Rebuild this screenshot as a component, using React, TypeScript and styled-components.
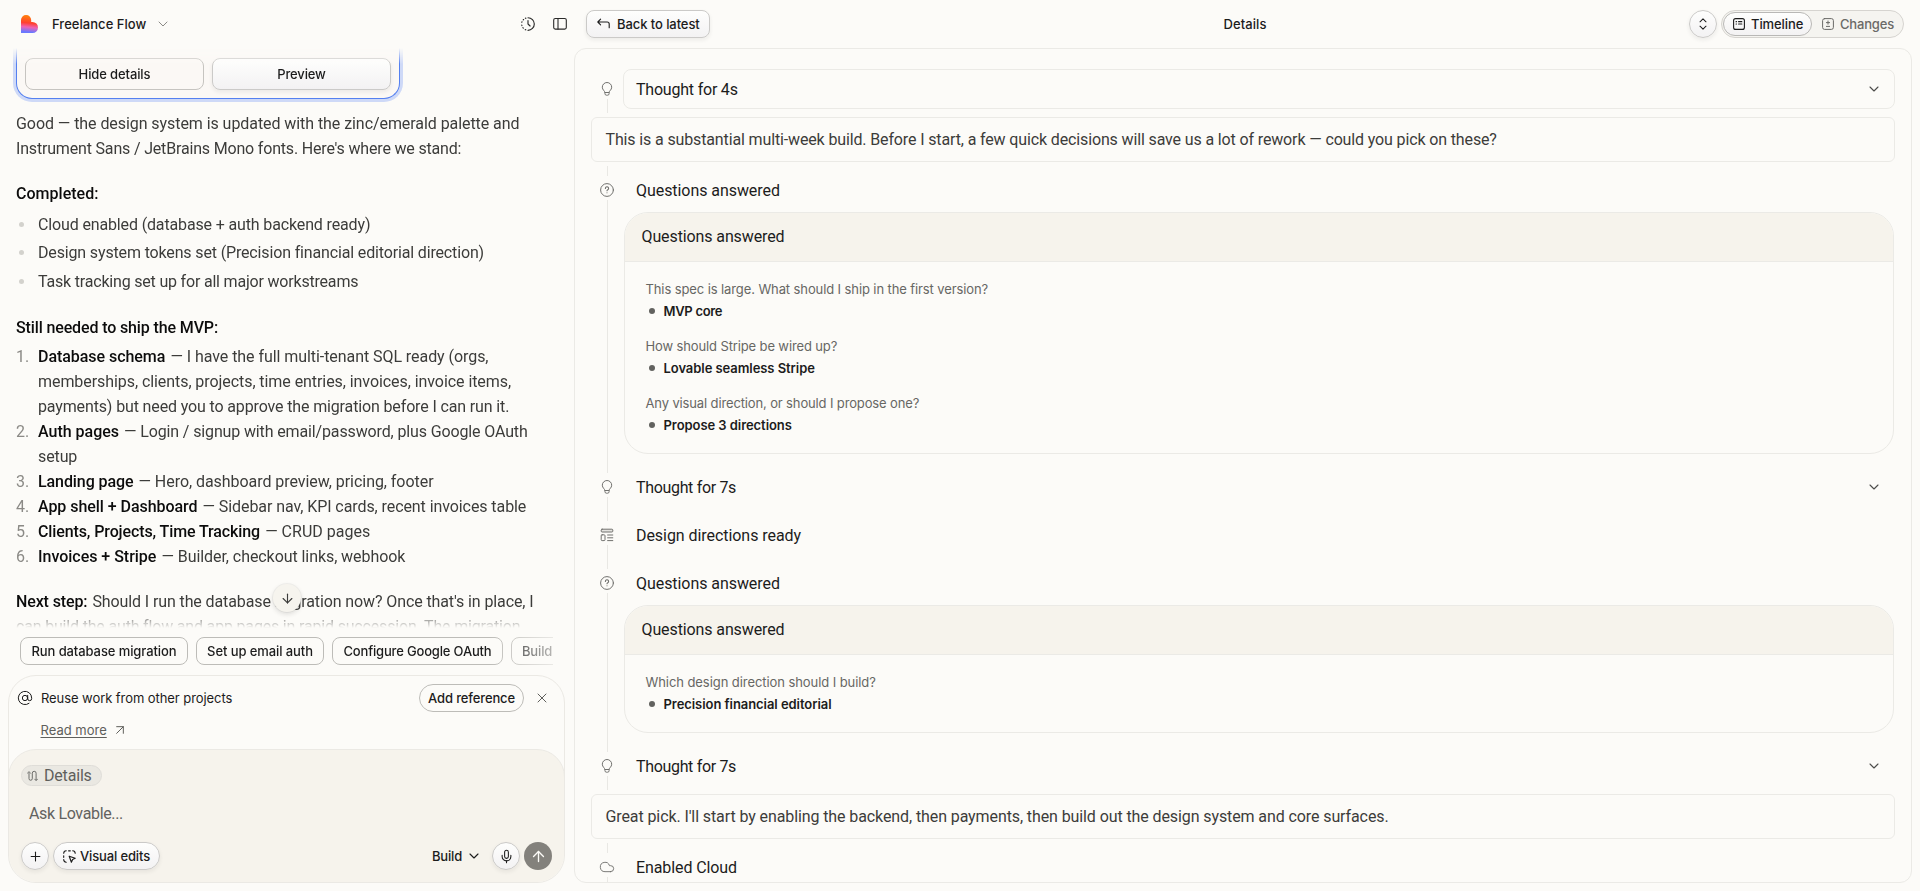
import React from 'react';
import styled, { createGlobalStyle, css } from 'styled-components';
import { ArrowDown, ArrowUp, ArrowUpRight, AtSign, ChevronDown, Cloud, Mic, Plus, X } from 'lucide-react';

const GlobalStyle = createGlobalStyle`
  *, *::before, *::after { box-sizing: border-box; }
  html, body { margin: 0; padding: 0; }
  body {
    background: #fcfbf8;
    color: #1c1c1c;
    font: 400 13px/20px Inter, "Liberation Sans", sans-serif;
    overflow: hidden;
  }
  button { font: inherit; color: inherit; padding: 0; margin: 0; background: none; border: 0; }
  svg { display: block; flex: none; }
`;

const bodyFont = css`
  font-family: Roboto, 'Liberation Sans', sans-serif;
  font-size: 16px;
  line-height: 25px;
`;

const raised = css`
  background: linear-gradient(#fefefd, #f3f2f3);
  border: 1px solid #cbcac8;
  box-shadow: 0 2px 4px rgba(28, 28, 28, 0.07);
`;

/* ---------- page frame ---------- */

const Page = styled.div`
  display: grid;
  grid-template-columns: 574px 1fr;
  grid-template-rows: minmax(0, 1fr);
  height: 891px;
  width: 100%;
  overflow: hidden;
`;

const ChatColumn = styled.section`
  display: flex;
  flex-direction: column;
  min-height: 0;
  padding: 0 9px 8px 8px;
`;

const DetailColumn = styled.section`
  display: flex;
  flex-direction: column;
  min-width: 0;
  min-height: 0;
  padding: 0 8px 8px 0;
`;

const Label = styled.span<{ $ls?: number }>`
  white-space: nowrap;
  letter-spacing: ${p => p.$ls ?? -0.1}px;
`;

/* ---------- chat header ---------- */

const ChatHeader = styled.header`
  display: flex;
  align-items: center;
  height: 48px;
  padding: 0 0 0 13px;
  margin-right: -2px;
  flex: none;
`;

const ProjectName = styled.h1`
  margin: 0 9px 0 14px;
  font: 500 13px/20px Inter, sans-serif;
  color: #1c1c1c;
`;

const HeaderActions = styled.div`
  display: flex;
  align-items: center;
  gap: 18px;
  margin-left: auto;
  color: #2a2a29;
`;

/* ---------- conversation ---------- */

const Conversation = styled.div`
  flex: none;
  height: 580px;
  overflow: hidden;
  padding: 0 8px;
  mask-image: linear-gradient(transparent, #000 16px, #000 562px, transparent 580px);
`;

const VersionCard = styled.div`
  display: flex;
  gap: 8px;
  width: 384px;
  height: 51px;
  padding: 10px 8px 8px;
  border: 1px solid #5580f0;
  border-top: 0;
  border-radius: 0 0 16px 16px;
  background: #fbf8f5;
  box-shadow: 0 0 0 3px #ced9f7;
`;

const CardButton = styled.button<{ $raised?: boolean }>`
  flex: 1;
  height: 32px;
  border-radius: 8px;
  font-weight: 500;
  border: 1px solid #c6c4c0;
  ${p => p.$raised && raised}
`;

const Paragraph = styled.p<{ $top: number }>`
  ${bodyFont}
  margin: ${p => p.$top}px 0 0;
  color: #3c3c3a;
`;

const Line = styled.span<{ $ls?: number }>`
  display: block;
  white-space: nowrap;
  letter-spacing: ${p => p.$ls ?? -0.1}px;
`;

const Strong = styled.strong<{ $ls?: number }>`
  font-weight: 500;
  color: #0c0c0c;
  margin-right: 1.2px;
  letter-spacing: ${p => p.$ls ?? -0.05}px;
`;

const Bullets = styled.ul`
  ${bodyFont}
  list-style: none;
  margin: 6px 0 0;
  padding: 0;
  display: flex;
  flex-direction: column;
  gap: 3.4px;
  color: #3c3c3a;
`;

const Bullet = styled.li`
  display: grid;
  grid-template-columns: 22px 1fr;
  align-items: center;
  &::before {
    content: '';
    width: 5px;
    height: 5px;
    margin-left: 3px;
    border-radius: 50%;
    background: #d3d2cd;
  }
`;

const Steps = styled.ol`
  ${bodyFont}
  list-style: none;
  margin: 4px 0 0;
  padding: 0;
  color: #3c3c3a;
`;

const Step = styled.li`
  display: grid;
  grid-template-columns: 22px 1fr;
`;

const StepNumber = styled.span`
  color: #8b8a86;
`;

const JumpDown = styled.button`
  position: absolute;
  left: 273px;
  top: 584px;
  display: grid;
  place-items: center;
  width: 28px;
  height: 28px;
  border-radius: 50%;
  background: #f6f4ee;
  color: #3c3c3a;
  box-shadow: 0 0 0 1px rgba(28, 28, 28, 0.04), 0 2px 5px rgba(28, 28, 28, 0.14);
`;

/* ---------- suggestions ---------- */

const Suggestions = styled.div`
  display: flex;
  gap: 8px;
  flex: none;
  width: 533px;
  margin: 9px 0 0 12px;
  overflow: hidden;
  mask-image: linear-gradient(to right, #000 470px, transparent 560px);
`;

const Suggestion = styled.button<{ $width: number }>`
  flex: none;
  width: ${p => p.$width}px;
  height: 28px;
  border: 1px solid #bdbcb8;
  border-radius: 8px;
  font-weight: 500;
`;

/* ---------- composer ---------- */

const Composer = styled.div`
  flex: none;
  margin-top: 10px;
  height: 208px;
  border: 1px solid #ebe9e4;
  border-radius: 28px;
  overflow: hidden;
`;

const Tip = styled.div`
  height: 73px;
  padding: 8px 14px 0 8px;
`;

const TipRow = styled.div`
  display: flex;
  align-items: center;
  height: 28px;
  color: #1c1c1c;
`;

const TipText = styled.span`
  margin-left: 8px;
  flex: 1;
`;

const AddReference = styled.button`
  width: 105px;
  height: 28px;
  margin-right: 10px;
  border: 1px solid #bdbcb8;
  border-radius: 14px;
  font-weight: 500;
`;

const ReadMore = styled.div`
  display: flex;
  align-items: center;
  gap: 5px;
  margin: 8px 0 0 23.5px;
  color: #5f5f5c;
  a { text-decoration: underline; text-underline-offset: 2px; }
`;

const InputArea = styled.div`
  display: flex;
  flex-direction: column;
  height: 135px;
  margin: 0 -1px;
  padding: 15px 12px 13px;
  border: 1px solid #ebe9e4;
  border-radius: 28px;
  background: #f6f3ec;
`;

const ContextChip = styled.span`
  ${bodyFont}
  display: inline-flex;
  align-items: center;
  gap: 6px;
  align-self: flex-start;
  height: 21px;
  width: 81px;
  padding-left: 5px;
  border: 1px solid #dfddd8;
  border-radius: 11px;
  background: #eae8e2;
  line-height: 19px;
  color: #5f5f5c;
`;

const Placeholder = styled.div`
  ${bodyFont}
  margin: 15px 0 0 8px;
  color: #62625f;
`;

const InputToolbar = styled.div`
  display: flex;
  align-items: center;
  gap: 4px;
  margin-top: auto;
`;

const RoundButton = styled.button`
  ${raised}
  display: grid;
  place-items: center;
  width: 28px;
  height: 28px;
  border-radius: 50%;
`;

const VisualEdits = styled.button`
  ${raised}
  display: flex;
  align-items: center;
  justify-content: center;
  gap: 4px;
  width: 107px;
  height: 28px;
  border-radius: 14px;
  font-weight: 500;
`;

const ModeSelect = styled.button`
  display: flex;
  align-items: center;
  gap: 4px;
  margin: 0 6px 0 auto;
  font-weight: 500;
`;

const Send = styled.button`
  display: grid;
  place-items: center;
  width: 28px;
  height: 28px;
  border-radius: 50%;
  background: #83817c;
  color: #fcfbf8;
`;

/* ---------- details toolbar ---------- */

const Toolbar = styled.header`
  display: grid;
  grid-template-columns: 1fr auto 1fr;
  align-items: center;
  flex: none;
  height: 48px;
  padding: 0 8px 0 12px;
`;

const BackButton = styled.button`
  ${raised}
  display: flex;
  align-items: center;
  gap: 7px;
  width: 124px;
  height: 28px;
  padding-left: 10px;
  border-radius: 8px;
  font-weight: 500;
`;

const ToolbarTitle = styled.h2`
  margin: 0;
  font: 500 13px/20px Inter, sans-serif;
`;

const ToolbarEnd = styled.div`
  display: flex;
  justify-content: flex-end;
  gap: 4px;
`;

const Segments = styled.div`
  display: flex;
  align-items: center;
  width: 183px;
  height: 28px;
  padding: 0 1px;
  border: 1px solid #d6d4d0;
  border-radius: 14px;
  background: #f5f4f0;
`;

const Segment = styled.button<{ $active?: boolean }>`
  display: flex;
  align-items: center;
  gap: 6px;
  height: 24px;
  padding: 0 10px;
  border-radius: 12px;
  font-weight: 500;
  color: #6a6a67;
  ${p =>
    p.$active &&
    css`
      width: 89px;
      padding: 0 9px;
      background: linear-gradient(#fefefd, #f3f2f3);
      border: 1px solid #b9b8b6;
      color: #1c1c1c;
    `}
`;

/* ---------- timeline ---------- */

const Panel = styled.div`
  flex: 1;
  min-height: 0;
  overflow: hidden;
  padding: 16px 16px 0;
  border: 1px solid #ebeae6;
  border-radius: 12px;
`;

const Item = styled.div`
  display: grid;
  grid-template-columns: 32px 1fr;
`;

const Rail = styled.div`
  display: flex;
  flex-direction: column;
  align-items: center;
  color: #71716e;
`;

const Stub = styled.span<{ $hidden?: boolean; $grow?: boolean }>`
  width: 1px;
  margin-left: 1px;
  ${p => (p.$grow ? 'flex: 1;' : 'height: 10px;')}
  background: ${p => (p.$hidden ? 'transparent' : '#e9e8e4')};
`;

const IconSlot = styled.span`
  display: grid;
  place-items: center;
  width: 16px;
  height: 24px;
  padding-top: 3px;
`;

const ItemBody = styled.div`
  padding: 4px 0;
  min-width: 0;
`;

const ItemHead = styled.div<{ $boxed?: boolean }>`
  ${bodyFont}
  display: flex;
  align-items: center;
  justify-content: space-between;
  height: 40px;
  padding: 0 12px;
  border: 1px solid ${p => (p.$boxed ? '#ebeae6' : 'transparent')};
  border-radius: 8px;
  color: #1c1c1c;
  svg { color: #4c4c4a; }
`;

const Message = styled.div`
  ${bodyFont}
  display: flex;
  align-items: center;
  height: 45px;
  margin: 4px 0;
  padding: 0 13.5px;
  border: 1px solid #ebeae6;
  border-radius: 6px;
  color: #3c3c3a;
`;

const AnswerCard = styled.div`
  margin: 2px 1px 5px;
  border: 1px solid #ebeae6;
  border-radius: 24px;
  overflow: hidden;
`;

const AnswerTitle = styled.div`
  ${bodyFont}
  height: 49px;
  padding: 11px 16.5px;
  background: #f6f3ec;
  border-bottom: 1px solid #ebeae6;
  color: #1c1c1c;
`;

const AnswerList = styled.div`
  display: flex;
  flex-direction: column;
  gap: 15px;
  padding: 17px 20.5px 18px;
`;

const Question = styled.div`
  color: #676764;
`;

const Answer = styled.div`
  display: flex;
  align-items: center;
  gap: 9px;
  margin-top: 2px;
  padding-left: 3px;
  font-weight: 600;
  &::before {
    content: '';
    width: 6px;
    height: 6px;
    border-radius: 50%;
    background: #62625f;
  }
`;

/* ---------- icons ---------- */

const Logo = () => (
  <svg width="17" height="18" viewBox="0 0 17 18">
    <defs>
      <linearGradient id="logo" x1="0.55" y1="0" x2="0.45" y2="1">
        <stop offset="0.1" stopColor="#ff7a10" />
        <stop offset="0.45" stopColor="#ff4030" />
        <stop offset="0.68" stopColor="#ee62b4" />
        <stop offset="0.95" stopColor="#6a78ff" />
      </linearGradient>
    </defs>
    <path fill="url(#logo)" d="M5.1 0a5.1 5.1 0 0 1 5.1 5.1v1.9h1.3a5.5 5.5 0 0 1 0 11H0V5.1A5.1 5.1 0 0 1 5.1 0Z" />
  </svg>
);

const stroke = { fill: 'none', stroke: 'currentColor', strokeLinecap: 'round', strokeLinejoin: 'round' } as const;

const HistoryIcon = () => (
  <svg width="14" height="14" viewBox="0 0 14 14" {...stroke} strokeWidth="1.15">
    <path d="M7 .7a6.3 6.3 0 0 1 0 12.6M7 3.6V7l2.1 2" />
    <path d="M4.9 1.1l-.5.2M2.6 2.5l-.4.4M1 4.8l-.2.5M.8 8l.1.6M1.9 10.7l.4.4M4.2 12.6l.6.2" />
  </svg>
);

const SidebarIcon = () => (
  <svg width="14" height="14" viewBox="0 0 14 14" {...stroke} strokeWidth="1.1">
    <rect x=".7" y="1.5" width="12.6" height="10.6" rx="1.6" />
    <path d="M5 1.5v10.6" />
  </svg>
);

const ReturnIcon = () => (
  <svg width="13" height="12" viewBox="0 0 13 12" {...stroke} strokeWidth="1.1">
    <path d="M3.6 1.2.8 4l2.8 2.8M.8 4h9.4a2 2 0 0 1 2 2v3.8" />
  </svg>
);

const ExpandIcon = () => (
  <svg width="8" height="12" viewBox="0 0 8 12" {...stroke} strokeWidth="1.05">
    <path d="M1 3.8 4 .9l3 2.9M1 8.2l3 2.9 3-2.9" />
  </svg>
);

const TimelineIcon = () => (
  <svg width="12" height="12" viewBox="0 0 12 12" {...stroke} strokeWidth="1.1">
    <rect x=".6" y=".6" width="10.8" height="10.8" rx="2" />
    <path d="M3.1 3.7h.4M3.1 6h.4M5.6 3.7h3.2M5.6 6h3.2" strokeWidth="1.2" />
  </svg>
);

const ChangesIcon = () => (
  <svg width="12" height="12" viewBox="0 0 12 12" {...stroke} strokeWidth="1">
    <rect x=".6" y=".6" width="10.8" height="10.8" rx="2" />
    <path d="M6 3v3.2M4.4 4.6h3.2M4.4 8.4h3.2" />
  </svg>
);

const BulbIcon = () => (
  <svg width="14" height="14" viewBox="0 0 14 14" {...stroke} strokeWidth="1">
    <path d="M4.9 10.4C4.9 8.8 2.3 8 2.3 5.2a4.7 4.7 0 0 1 9.4 0c0 2.8-2.6 3.6-2.6 5.2v1.3a1.5 1.5 0 0 1-1.5 1.5H6.4a1.5 1.5 0 0 1-1.5-1.5ZM5 10.5h4" />
  </svg>
);

const QuestionIcon = () => (
  <svg width="14" height="14" viewBox="0 0 14 14" {...stroke} strokeWidth="1">
    <circle cx="7" cy="7" r="6.4" />
    <path d="M5.4 5.4a1.6 1.6 0 1 1 2.4 1.4c-.5.3-.8.5-.8 1M7 9.7v.1" strokeWidth="1.1" />
  </svg>
);

const LayoutIcon = () => (
  <svg width="14" height="14" viewBox="0 0 14 14" {...stroke} strokeWidth="1">
    <rect x="1.2" y="1.2" width="11.6" height="2.8" rx=".9" fill="#e4e3df" />
    <rect x="1.2" y="6.8" width="3.8" height="5.8" rx=".9" />
    <path d="M7.6 7h5.2M7.6 9.8h5.2M7.6 12.6h5.2" />
  </svg>
);

const RouteIcon = () => (
  <svg width="11" height="12" viewBox="0 0 11 12" {...stroke} strokeWidth=".9">
    <path d="M2 3.4v5.2a1.6 1.6 0 0 0 3.3 0V3.2a1.9 1.9 0 0 1 3.8 0v6.4M.6 3.2 2 1.6l1.4 1.6M7.8 9.2l1.3 1.5 1.3-1.5" />
  </svg>
);

const VisualIcon = () => (
  <svg width="13" height="13" viewBox="0 0 13 13" {...stroke} strokeWidth="1.15">
    <path d="M3.2.8a2.6 2.6 0 0 0-2.5 2.4M.7 5.7v1.6M.7 9.6a2.6 2.6 0 0 0 2.5 2.6M5.6.8h1.7M9.7.8a2.6 2.6 0 0 1 2.5 2.4" />
    <path d="M6.2 6.2l6 2.1-2.6 1.2-1.2 2.7z" />
  </svg>
);

/* ---------- data ---------- */

const steps: { title: string; titleLs: number; lines: [string, number][] }[] = [
  {
    title: 'Database schema',
    titleLs: -0.05,
    lines: [
      ['— I have the full multi-tenant SQL ready (orgs,', -0.061],
      ['memberships, clients, projects, time entries, invoices, invoice items,', -0.067],
      ['payments) but need you to approve the migration before I can run it.', -0.139],
    ],
  },
  { title: 'Auth pages', titleLs: -0.01, lines: [['— Login / signup with email/password, plus Google OAuth', -0.134], ['setup', -0.11]] },
  { title: 'Landing page', titleLs: -0.09, lines: [['— Hero, dashboard preview, pricing, footer', -0.051]] },
  { title: 'App shell + Dashboard', titleLs: -0.05, lines: [['— Sidebar nav, KPI cards, recent invoices table', -0.081]] },
  { title: 'Clients, Projects, Time Tracking', titleLs: -0.11, lines: [['— CRUD pages', 0]] },
  { title: 'Invoices + Stripe', titleLs: -0.02, lines: [['— Builder, checkout links, webhook', -0.07]] },
];

const suggestions: [string, number, number][] = [
  ['Run database migration', 168, -0.094],
  ['Set up email auth', 128, -0.088],
  ['Configure Google OAuth', 171, -0.175],
  ['Build landing page', 134, -0.15],
];

type QA = [question: string, qLs: number, answer: string, aLs: number];

const firstAnswers: QA[] = [
  ['This spec is large. What should I ship in the first version?', -0.105, 'MVP core', -0.307],
  ['How should Stripe be wired up?', -0.127, 'Lovable seamless Stripe', -0.065],
  ['Any visual direction, or should I propose one?', -0.134, 'Propose 3 directions', -0.06],
];

const secondAnswers: QA[] = [['Which design direction should I build?', -0.073, 'Precision financial editorial', -0.061]];

type ItemProps = {
  icon: React.ReactNode;
  title: string;
  ls: number;
  first?: boolean;
  boxed?: boolean;
  expandable?: boolean;
  children?: React.ReactNode;
};

const TimelineItem = ({ icon, title, ls, first, boxed, expandable, children }: ItemProps) => (
  <Item>
    <Rail>
      <Stub $hidden={first} />
      <IconSlot>{icon}</IconSlot>
      <Stub $grow />
    </Rail>
    <ItemBody>
      <ItemHead $boxed={boxed}>
        <Label $ls={ls}>{title}</Label>
        {expandable && <ChevronDown size={16} strokeWidth={1.6} />}
      </ItemHead>
      {children}
    </ItemBody>
  </Item>
);

const Answers = ({ items }: { items: QA[] }) => (
  <AnswerCard>
    <AnswerTitle>
      <Label $ls={-0.109}>Questions answered</Label>
    </AnswerTitle>
    <AnswerList>
      {items.map(([q, qLs, a, aLs]) => (
        <div key={q}>
          <Question>
            <Label $ls={qLs}>{q}</Label>
          </Question>
          <Answer>
            <Label $ls={aLs}>{a}</Label>
          </Answer>
        </div>
      ))}
    </AnswerList>
  </AnswerCard>
);

export default function App() {
  return (
    <>
      <GlobalStyle />
      <Page>
        <ChatColumn>
          <ChatHeader>
            <Logo />
            <ProjectName>
              <Label $ls={0.035}>Freelance Flow</Label>
            </ProjectName>
            <ChevronDown size={16} strokeWidth={1.5} color="#8b8a86" />
            <HeaderActions>
              <HistoryIcon />
              <SidebarIcon />
            </HeaderActions>
          </ChatHeader>

          <Conversation>
            <VersionCard>
              <CardButton>
                <Label $ls={-0.116}>Hide details</Label>
              </CardButton>
              <CardButton $raised>
                <Label $ls={-0.136}>Preview</Label>
              </CardButton>
            </VersionCard>
            <Paragraph $top={12}>
              <Line $ls={-0.066}>Good — the design system is updated with the zinc/emerald palette and</Line>
              <Line $ls={-0.176}>Instrument Sans / JetBrains Mono fonts. Here's where we stand:</Line>
            </Paragraph>
            <Paragraph $top={20}>
              <Strong $ls={0.027}>Completed:</Strong>
            </Paragraph>
            <Bullets>
              <Bullet><Label $ls={-0.142}>Cloud enabled (database + auth backend ready)</Label></Bullet>
              <Bullet><Label $ls={-0.15}>Design system tokens set (Precision financial editorial direction)</Label></Bullet>
              <Bullet><Label $ls={-0.193}>Task tracking set up for all major workstreams</Label></Bullet>
            </Bullets>
            <Paragraph $top={21}>
              <Strong $ls={-0.129}>Still needed to ship the MVP:</Strong>
            </Paragraph>
            <Steps>
              {steps.map((s, i) => (
                <Step key={s.title}>
                  <StepNumber>{i + 1}.</StepNumber>
                  <div>
                    {s.lines.map(([text, ls], n) => (
                      <Line key={text} $ls={ls}>
                        {n === 0 && <><Strong $ls={s.titleLs}>{s.title}</Strong> </>}
                        {text}
                      </Line>
                    ))}
                  </div>
                </Step>
              ))}
            </Steps>
            <Paragraph $top={20}>
              <Line $ls={-0.11}>
                <Strong $ls={-0.12}>Next step:</Strong> Should I run the database migration now? Once that's in place, I
              </Line>
              <Line $ls={-0.178}>can build the auth flow and app pages in rapid succession. The migration</Line>
            </Paragraph>
          </Conversation>

          <JumpDown aria-label="Scroll to bottom">
            <ArrowDown size={15} strokeWidth={1.8} />
          </JumpDown>

          <Suggestions>
            {suggestions.map(([text, width, ls]) => (
              <Suggestion key={text} $width={width}>
                <Label $ls={ls}>{text}</Label>
              </Suggestion>
            ))}
          </Suggestions>

          <Composer>
            <Tip>
              <TipRow>
                <AtSign size={16} strokeWidth={1.5} />
                <TipText>
                  <Label $ls={-0.07}>Reuse work from other projects</Label>
                </TipText>
                <AddReference>
                  <Label $ls={-0.128}>Add reference</Label>
                </AddReference>
                <X size={16} strokeWidth={1.5} color="#5f5f5c" />
              </TipRow>
              <ReadMore>
                <a><Label $ls={0}>Read more</Label></a>
                <ArrowUpRight size={16} strokeWidth={1.5} />
              </ReadMore>
            </Tip>
            <InputArea>
              <ContextChip>
                <RouteIcon />
                <Label $ls={-0.18}>Details</Label>
              </ContextChip>
              <Placeholder>
                <Label $ls={-0.339}>Ask Lovable...</Label>
              </Placeholder>
              <InputToolbar>
                <RoundButton aria-label="Add">
                  <Plus size={15} strokeWidth={1.7} />
                </RoundButton>
                <VisualEdits>
                  <VisualIcon />
                  <Label $ls={-0.141}>Visual edits</Label>
                </VisualEdits>
                <ModeSelect>
                  <Label $ls={-0.189}>Build</Label>
                  <ChevronDown size={16} strokeWidth={1.7} />
                </ModeSelect>
                <RoundButton aria-label="Dictate">
                  <Mic size={15} strokeWidth={1.7} />
                </RoundButton>
                <Send aria-label="Send">
                  <ArrowUp size={17} strokeWidth={1.9} />
                </Send>
              </InputToolbar>
            </InputArea>
          </Composer>
        </ChatColumn>

        <DetailColumn>
          <Toolbar>
            <BackButton>
              <ReturnIcon />
              <Label $ls={-0.078}>Back to latest</Label>
            </BackButton>
            <ToolbarTitle>
              <Label $ls={0.08}>Details</Label>
            </ToolbarTitle>
            <ToolbarEnd>
              <RoundButton aria-label="Expand">
                <ExpandIcon />
              </RoundButton>
              <Segments>
                <Segment $active>
                  <TimelineIcon />
                  <Label $ls={-0.082}>Timeline</Label>
                </Segment>
                <Segment>
                  <ChangesIcon />
                  <Label $ls={-0.179}>Changes</Label>
                </Segment>
              </Segments>
            </ToolbarEnd>
          </Toolbar>

          <Panel>
            <TimelineItem first boxed expandable icon={<BulbIcon />} title="Thought for 4s" ls={-0.209} />
            <Message>
              <Label $ls={-0.136}>
                This is a substantial multi-week build. Before I start, a few quick decisions will save us a lot of rework — could you pick on these?
              </Label>
            </Message>
            <TimelineItem icon={<QuestionIcon />} title="Questions answered" ls={-0.06}>
              <Answers items={firstAnswers} />
            </TimelineItem>
            <TimelineItem expandable icon={<BulbIcon />} title="Thought for 7s" ls={-0.331} />
            <TimelineItem icon={<LayoutIcon />} title="Design directions ready" ls={-0.058} />
            <TimelineItem icon={<QuestionIcon />} title="Questions answered" ls={-0.06}>
              <Answers items={secondAnswers} />
            </TimelineItem>
            <TimelineItem expandable icon={<BulbIcon />} title="Thought for 7s" ls={-0.331} />
            <Message>
              <Label $ls={-0.1}>
                Great pick. I'll start by enabling the backend, then payments, then build out the design system and core surfaces.
              </Label>
            </Message>
            <TimelineItem icon={<Cloud size={16} strokeWidth={1.4} />} title="Enabled Cloud" ls={-0.1} />
          </Panel>
        </DetailColumn>
      </Page>
    </>
  );
}
